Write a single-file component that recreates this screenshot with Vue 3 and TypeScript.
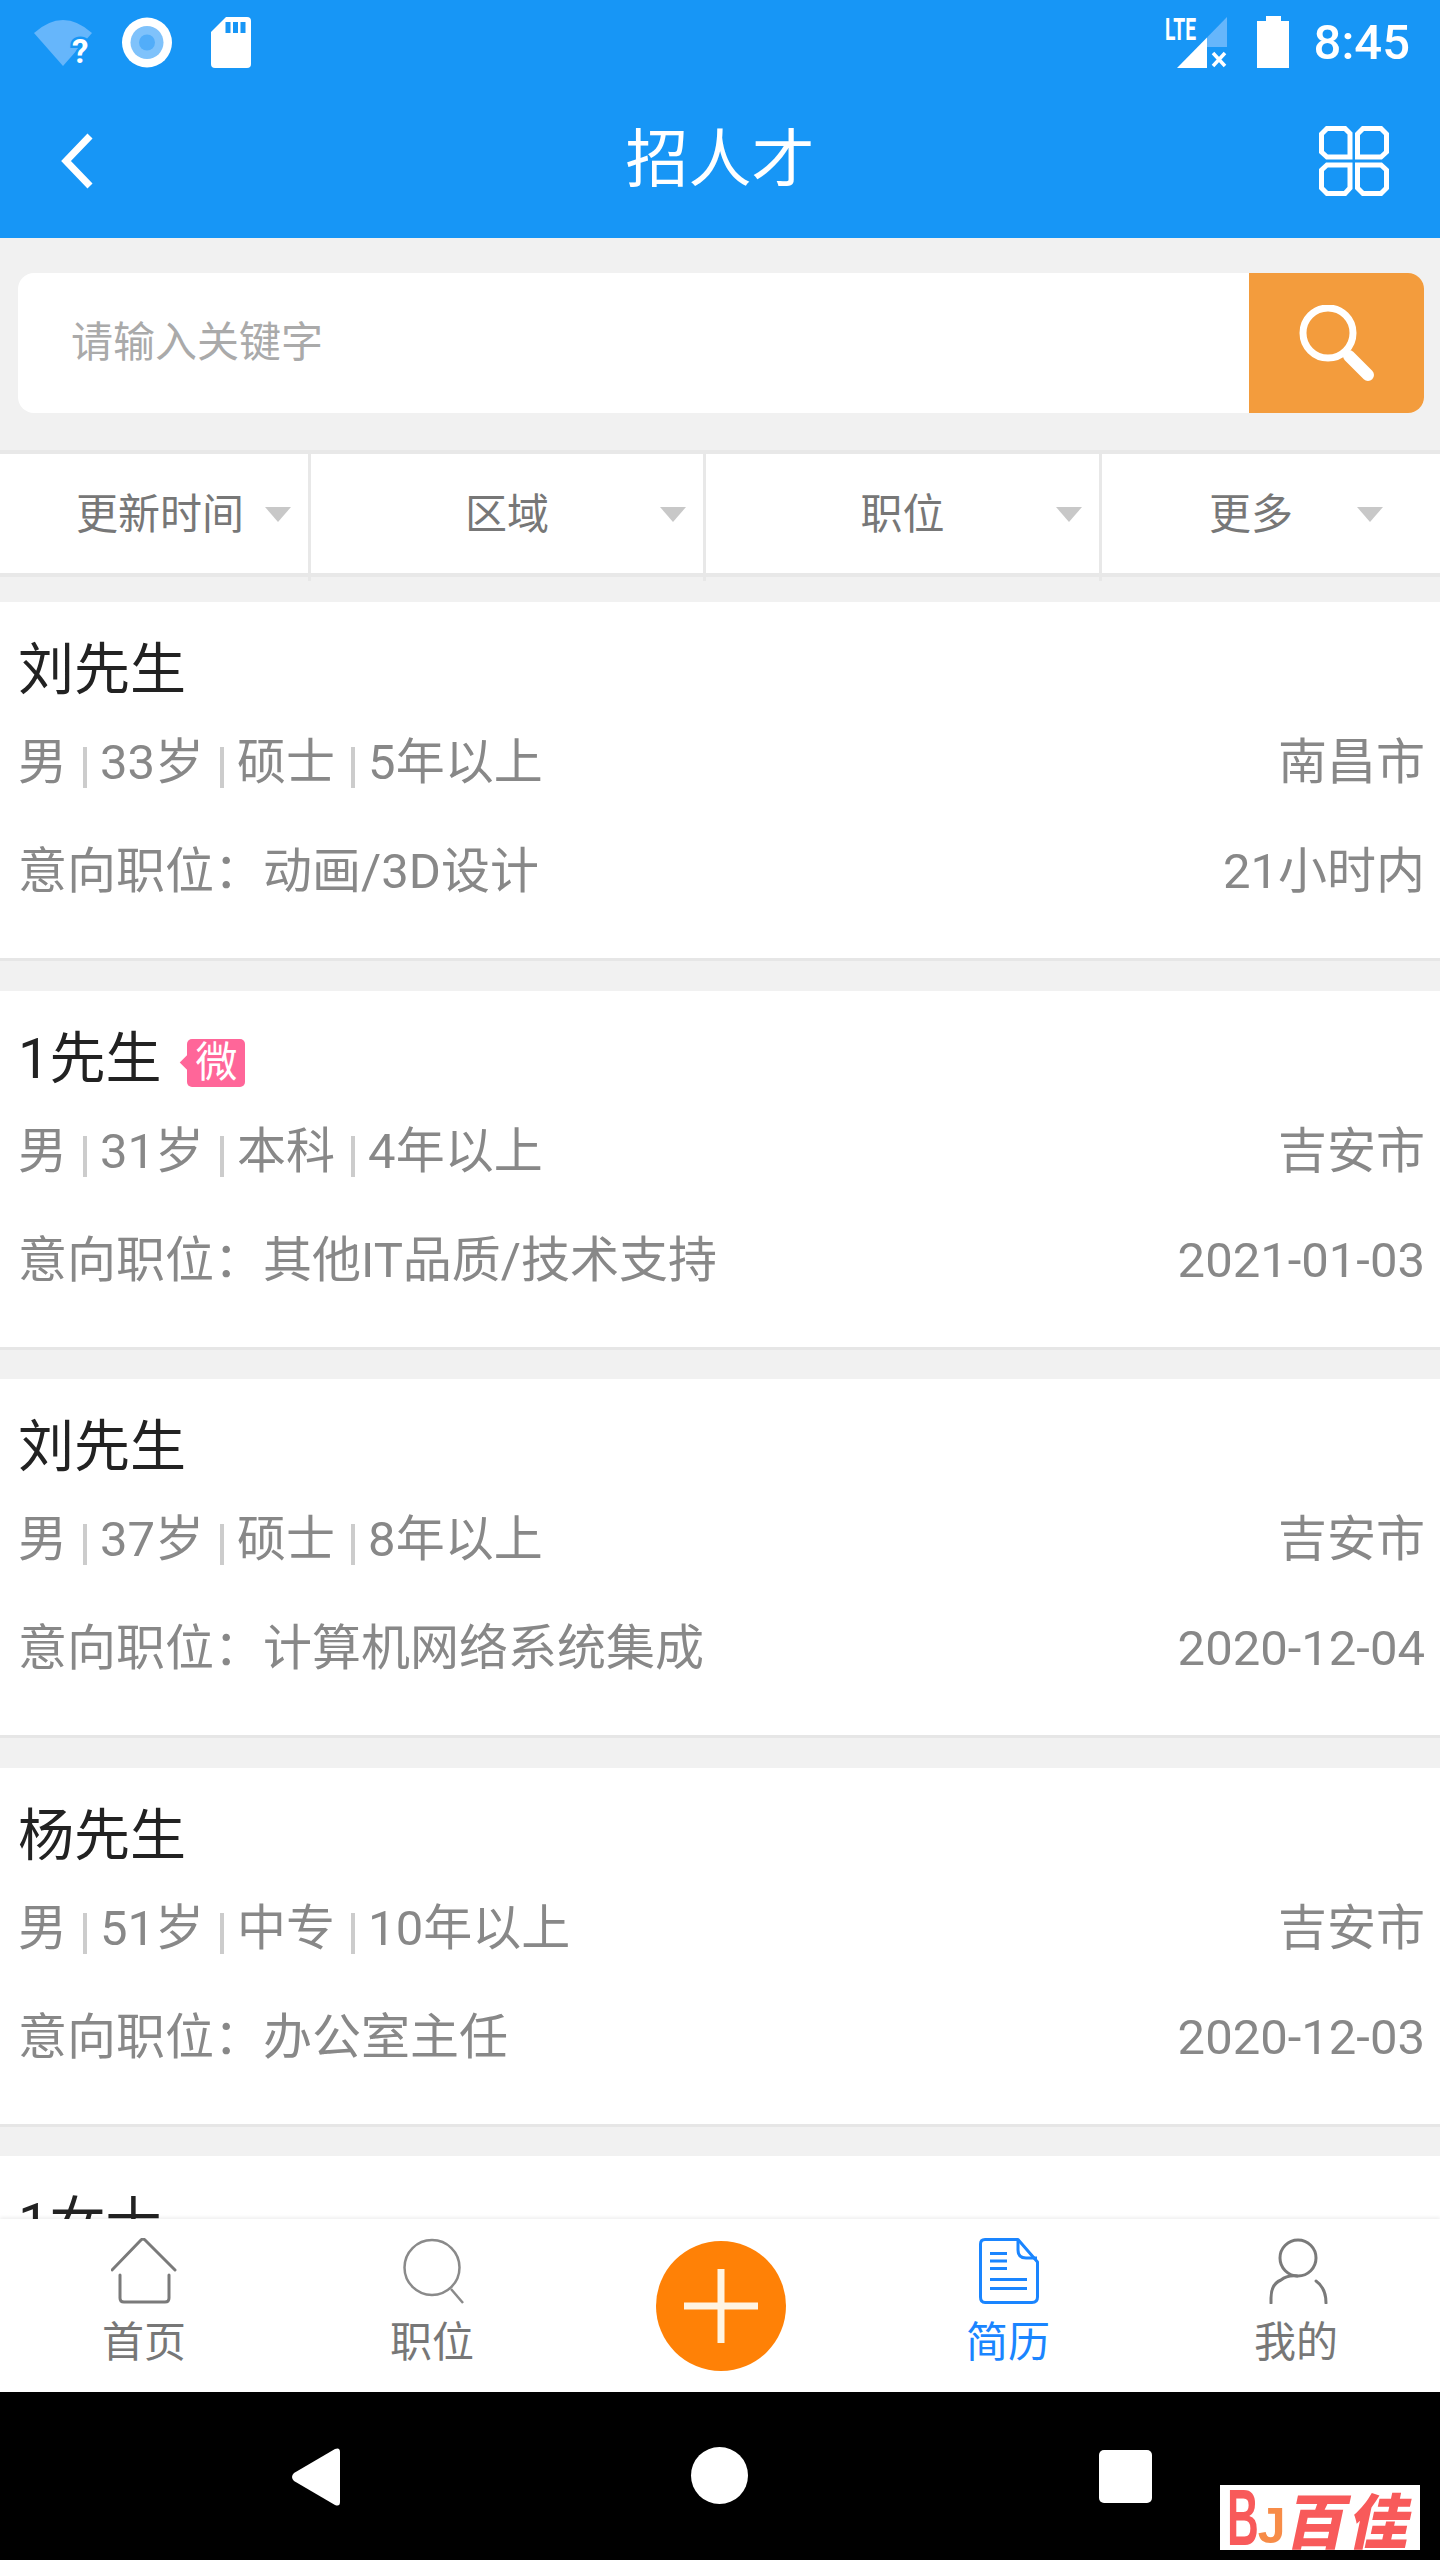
<script setup lang="ts">
interface Candidate {
  name: string;
  badge?: boolean;
  meta: string[];
  city: string;
  job: string;
  time: string;
}
const filters = [
  { label: '更新时间', cls: 'first' },
  { label: '区域', cls: '' },
  { label: '职位', cls: 'third' },
  { label: '更多', cls: 'last' },
];
const candidates: Candidate[] = [
  { name: '刘先生', meta: ['男', '33岁', '硕士', '5年以上'], city: '南昌市', job: '意向职位：动画/3D设计', time: '21小时内' },
  { name: '1先生', badge: true, meta: ['男', '31岁', '本科', '4年以上'], city: '吉安市', job: '意向职位：其他IT品质/技术支持', time: '2021-01-03' },
  { name: '刘先生', meta: ['男', '37岁', '硕士', '8年以上'], city: '吉安市', job: '意向职位：计算机网络系统集成', time: '2020-12-04' },
  { name: '杨先生', meta: ['男', '51岁', '中专', '10年以上'], city: '吉安市', job: '意向职位：办公室主任', time: '2020-12-03' },
  { name: '1女士', meta: [], city: '', job: '', time: '' },
];
</script>

<template>
  <div class="phone">
    <header class="appbar">
      <div class="status">
        <div class="status-left">
          <svg class="i-wifi" width="58" height="47" viewBox="0 0 58 47">
            <path d="M29 47 L0 14 Q29 -12 58 14 Z" fill="#66b6fb" />
            <text x="38" y="44" class="q">?</text>
          </svg>
          <svg width="50" height="51" viewBox="0 0 50 51">
            <circle cx="25" cy="25.500" r="25" fill="#fff" />
            <circle cx="25" cy="25.500" r="16.500" fill="#7fc2fb" />
            <circle cx="25" cy="25.500" r="8" fill="#52adf9" />
          </svg>
          <svg width="40" height="51" viewBox="0 0 40 51">
            <path d="M15 0 H36 Q40 0 40 4 V47 Q40 51 36 51 H4 Q0 51 0 47 V15 Z" fill="#fff" />
            <rect x="14.500" y="5" width="5" height="11" fill="#1796f6" />
            <rect x="22" y="5" width="5" height="11" fill="#1796f6" />
            <rect x="29.500" y="5" width="5" height="11" fill="#1796f6" />
          </svg>
        </div>
        <div class="status-right">
          <svg width="62" height="52" viewBox="0 0 62 52">
            <text x="0" y="24" class="lte" textLength="31" lengthAdjust="spacingAndGlyphs">LTE</text>
            <path d="M42 21.400 L62 1 V31 H42 Z" fill="#66b6fb" />
            <path d="M12 52 L42 21.400 V52 Z" fill="#fff" />
            <path d="M48 37 L60 50 M60 37 L48 50" stroke="#fff" stroke-width="3.500" />
          </svg>
          <svg width="32" height="52" viewBox="0 0 32 52">
            <path d="M9 0 H24 V5 H32 V52 H0 V5 H9 Z" fill="#fff" />
          </svg>
          <span class="clock">8:45</span>
        </div>
      </div>
      <div class="toolbar">
        <svg class="back" width="34" height="56" viewBox="0 0 34 56">
          <path d="M30 3 L6 28 L30 53" fill="none" stroke="#fff" stroke-width="7" />
        </svg>
        <h1 class="title">招人才</h1>
        <svg class="grid-icon" width="70" height="70" viewBox="0 0 70 70">
          <g fill="none" stroke="#fff" stroke-width="5">
            <path d="M8 2.500 H26 L31 7.500 V31 H8 L2.500 26 V8 Z" />
            <path d="M44 2.500 H62 L67.500 8 V26 L62 31 H38.500 V8 Z" />
            <path d="M8 39 H31 V62 L26 67.500 H8 L2.500 62 V44 Z" />
            <path d="M38.500 39 H62 L67.500 44 V62 L62 67.500 H44 L38.500 62 Z" />
          </g>
        </svg>
      </div>
    </header>

    <section class="search">
      <div class="search-box">
        <span class="placeholder">请输入关键字</span>
        <button class="search-btn">
          <svg width="76" height="76" viewBox="0 0 76 76">
            <circle cx="29" cy="28" r="25" fill="none" stroke="#fff" stroke-width="7" />
            <path d="M50 51 L69 70" stroke="#fff" stroke-width="12" stroke-linecap="round" />
          </svg>
        </button>
      </div>
    </section>

    <nav class="filters">
      <div v-for="f in filters" :key="f.label" class="filter" :class="f.cls">
        <span class="filter-label">{{ f.label }}</span>
        <i class="caret"></i>
      </div>
    </nav>

    <main class="list">
      <article v-for="(c, idx) in candidates" :key="idx" class="card">
        <div class="name-row">
          <span class="name">{{ c.name }}</span>
          <span v-if="c.badge" class="badge">微</span>
        </div>
        <template v-if="c.meta.length">
          <div class="row meta-row">
            <div class="meta">
              <template v-for="(m, i) in c.meta" :key="i">
                <i v-if="i > 0" class="sep"></i>
                <span>{{ m }}</span>
              </template>
            </div>
            <span>{{ c.city }}</span>
          </div>
          <div class="row job-row">
            <span>{{ c.job }}</span>
            <span>{{ c.time }}</span>
          </div>
        </template>
      </article>
    </main>

    <footer class="tabbar">
      <div class="tab">
        <svg width="66" height="66" viewBox="0 0 66 66">
          <path d="M1 32 L30 2 Q32 0 34 2 L64 32 M9 37 V60 Q9 64 13 64 H54 Q58 64 58 60 V37" fill="none" stroke="#7a7a7a" stroke-width="3" stroke-linecap="round" />
        </svg>
        <span>首页</span>
      </div>
      <div class="tab">
        <svg class="shift-search" width="66" height="66" viewBox="0 0 66 66">
          <circle cx="29" cy="29.500" r="27.500" fill="none" stroke="#8a8a8a" stroke-width="2.500" />
          <path d="M48 51 L60 65" stroke="#8a8a8a" stroke-width="2.500" />
        </svg>
        <span>职位</span>
      </div>
      <div class="tab tab-add">
        <button class="add">
          <svg width="76" height="76" viewBox="0 0 76 76">
            <path d="M38 1 V75 M1 38 H75" stroke="#fff4e2" stroke-width="7" />
          </svg>
        </button>
      </div>
      <div class="tab active">
        <svg class="shift-doc" width="60" height="66" viewBox="0 0 60 66">
          <path d="M6 1.500 H39 L58.500 24 V59 Q58.500 64.500 53 64.500 H6 Q1.500 64.500 1.500 59 V6 Q1.500 1.500 6 1.500 Z" fill="none" stroke="#1a85ff" stroke-width="3" stroke-linejoin="round" />
          <path d="M39 1.500 V12 Q39 20 47 20 H58" fill="none" stroke="#1a85ff" stroke-width="3" />
          <path d="M11 15.500 H28 M11 23 H28 M11 30.500 H28 M11 41.500 H48 M11 50.500 H48" stroke="#1a85ff" stroke-width="3" />
        </svg>
        <span>简历</span>
      </div>
      <div class="tab">
        <svg class="shift-user" width="60" height="66" viewBox="0 0 60 66">
          <circle cx="29" cy="20" r="18" fill="none" stroke="#7a7a7a" stroke-width="3" />
          <path d="M2 65 V60 Q2 46 12 42 Q18 37 28 38 M47 43 Q57 50 57 65" fill="none" stroke="#7a7a7a" stroke-width="3" stroke-linecap="round" />
        </svg>
        <span>我的</span>
      </div>
    </footer>

    <div class="sysbar">
      <svg width="50" height="58" viewBox="0 0 50 58">
        <path d="M44 1 Q49 -1 49 4 V54 Q49 59 44 57 L3 33 Q-1 29 3 25 Z" fill="#fff" />
      </svg>
      <i class="sys-circle"></i>
      <i class="sys-square"></i>
      <div class="logo">
        <span class="logo-b">B</span><span class="logo-j">J</span><span class="logo-cn">百佳</span>
      </div>
    </div>
  </div>
</template>

<style>
html, body { margin: 0; background: #f1f1f1; }
</style>

<style scoped>
.phone {
  width: 1440px;
  height: 2560px;
  display: flex;
  flex-direction: column;
  overflow: hidden;
  background: #f1f1f1;
  font-family: Roboto, "Noto Sans CJK SC", sans-serif;
}
.appbar { height: 238px; background: #1796f6; flex: none; }
.status {
  height: 84px;
  display: flex;
  justify-content: space-between;
  align-items: center;
  padding: 0 30px 0 34px;
}
.status-left, .status-right { display: flex; align-items: center; }
.status-left svg + svg { margin-left: 30px; }
.status-left svg:nth-child(3) { margin-left: 39px; }
.q { font: 700 33px Roboto, sans-serif; fill: #fff; stroke: #1796f6; stroke-width: 5px; paint-order: stroke; }
.i-wifi { overflow: visible; }
.lte { font: 700 31px Roboto, sans-serif; fill: #fff; }
.status-right svg + svg { margin-left: 30px; }
.clock {
  flex: none;
  width: 98px;
  margin-left: 23px;
  font-size: 49px;
  font-weight: 500;
  text-align: right;
  color: #fff;
  line-height: 1;
}
.toolbar {
  height: 154px;
  display: grid;
  grid-template-columns: 1fr auto 1fr;
  align-items: center;
  padding: 0 51px;
}
.back { justify-self: start; margin-left: 9px; }
.grid-icon { justify-self: end; }
.title {
  margin: 0 0 4px;
  font-size: 63px;
  font-weight: 400;
  color: #fff;
  line-height: 1;
}
.search { padding: 35px 16px 37px 18px; flex: none; }
.search-box {
  height: 140px;
  background: #fff;
  border-radius: 16px;
  display: flex;
  align-items: center;
  justify-content: space-between;
  overflow: hidden;
}
.placeholder { margin-left: 53px; font-size: 42px; line-height: 56px; color: #aaa; }
.search-btn {
  width: 175px;
  height: 140px;
  border: 0;
  padding: 0;
  background: #f39c3d;
  display: flex;
  align-items: center;
  justify-content: center;
}
.filters {
  flex: none;
  height: 127px;
  box-sizing: border-box;
  background: #fff;
  border-top: 4px solid #e8e8e8;
  border-bottom: 4px solid #e8e8e8;
  display: flex;
}
.filter {
  position: relative;
  flex: none;
  width: 392px;
  display: flex;
  align-items: center;
  justify-content: center;
  font-size: 42px;
  line-height: 56px;
  color: #777;
  margin-right: 3px;
}
.filter::after {
  content: "";
  position: absolute;
  right: -3px;
  top: 0;
  bottom: -8px;
  width: 3px;
  background: #e8e8e8;
}
.filter.first { width: 308px; }
.filter.first .filter-label { margin-left: 12px; }
.filter.third { width: 393px; }
.filter.last { width: 298px; margin-right: 0; }
.filter.last::after { display: none; }
.filter-label { margin-top: 2px; }
.caret {
  position: absolute;
  right: 17px;
  top: 53px;
  width: 0;
  height: 0;
  border-left: 13px solid transparent;
  border-right: 13px solid transparent;
  border-top: 15px solid #c8c8c8;
}
.list {
  flex: 1;
  min-height: 0;
  overflow: hidden;
  padding-top: 25px;
}
.card {
  box-sizing: border-box;
  height: 359px;
  margin-bottom: 29.500px;
  padding: 34px 15px 0 18px;
  background: #fff;
  border-bottom: 3px solid #e6e6e6;
}
.name-row { height: 68px; display: flex; align-items: center; }
.name { font-size: 56px; color: #222; line-height: 68px; }
.badge {
  position: relative;
  margin-left: 26px;
  margin-top: 8px;
  width: 58px;
  height: 48px;
  border-radius: 5px;
  background: #ff6699;
  color: #fff;
  font-size: 42px;
  line-height: 48px;
  text-align: center;
}
.badge::before {
  content: "";
  position: absolute;
  left: -5px;
  top: 18px;
  width: 11px;
  height: 11px;
  background: #ff6699;
  transform: rotate(45deg);
}
.row {
  height: 68px;
  display: flex;
  justify-content: space-between;
  align-items: center;
  font-size: 49px;
  line-height: 68px;
  color: #888;
}
.meta-row { margin-top: 25px; }
.job-row { margin-top: 41px; }
.meta { display: flex; align-items: center; }
.sep {
  display: block;
  width: 4px;
  height: 41px;
  margin: 9px 13px 0 16px;
  background: #ccc;
}
.tabbar {
  flex: none;
  height: 173px;
  background: #fff;
  box-shadow: 0 -2px 3px rgba(0, 0, 0, 0.06);
  display: grid;
  grid-template-columns: repeat(5, 288px);
  position: relative;
}
.tab {
  display: flex;
  flex-direction: column;
  align-items: center;
  padding-top: 19px;
  font-size: 42px;
  color: #777;
}
.tab span { margin-top: 11px; line-height: 56px; }
.tab.active { color: #1a85ff; }
.shift-search { margin-left: 8px; }
.shift-doc { margin-left: 2px; }
.shift-user { margin-left: 6px; }
.tab-add { padding-top: 0; justify-content: center; }
.add {
  width: 130px;
  height: 130px;
  margin-left: 2px;
  border: 0;
  padding: 0;
  border-radius: 50%;
  background: #ff8106;
  display: flex;
  align-items: center;
  justify-content: center;
}
.sysbar {
  position: relative;
  flex: none;
  height: 168px;
  background: #000;
  box-sizing: border-box;
  padding-bottom: 4px;
}
.sysbar > svg { position: absolute; left: 291px; top: 56px; }
.sys-circle {
  position: absolute;
  left: 691px;
  top: 55px;
  width: 57px;
  height: 57px;
  border-radius: 50%;
  background: #fff;
}
.sys-square {
  position: absolute;
  left: 1099px;
  top: 58px;
  width: 53px;
  height: 53px;
  border-radius: 5px;
  background: #fff;
}
.logo {
  position: absolute;
  left: 1220px;
  top: 93px;
  width: 200px;
  height: 65px;
  box-sizing: border-box;
  padding-left: 7px;
  background: #fff;
  display: flex;
  align-items: center;
  line-height: 65px;
  color: #f85a5a;
}
.logo-b {
  flex: none;
  margin-right: -27px;
  font: 700 80px/65px "Liberation Sans", sans-serif;
  transform: scaleX(0.55);
  transform-origin: left center;
}
.logo-j {
  flex: none;
  margin: 18px 0 0 0;
  font: 700 50px/65px "Liberation Sans", sans-serif;
  color: #f78c48;
}
.logo-cn {
  flex: none;
  margin-left: 4px;
  font-size: 60px;
  font-weight: 900;
  letter-spacing: 3px;
  transform: skewX(-12deg);
  font-family: "Noto Sans CJK SC", sans-serif;
}
</style>
